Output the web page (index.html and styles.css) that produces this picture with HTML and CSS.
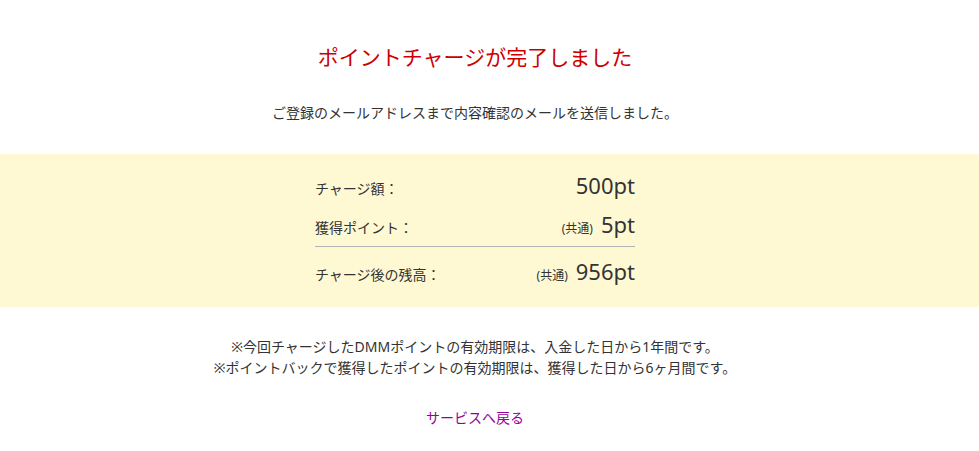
FILE: index.html
```html
<!DOCTYPE html>
<html lang="ja">
<head>
<meta charset="utf-8">
<title>ポイントチャージ完了</title>
<link rel="stylesheet" href="styles.css">
</head>
<body>
<div class="wrap">
  <h1 class="title">ポイントチャージが完了しました</h1>
  <p class="lead">ご登録のメールアドレスまで内容確認のメールを送信しました。</p>
</div>
<div class="band">
  <div class="wrap">
    <div class="summary">
      <div class="row">
        <span class="label">チャージ額：</span>
        <span class="value">500pt</span>
      </div>
      <div class="row row-2">
        <span class="label">獲得ポイント：</span>
        <span class="value"><span class="note-tag">(共通)</span>5pt</span>
      </div>
      <div class="row row-total">
        <span class="label">チャージ後の残高：</span>
        <span class="value"><span class="note-tag">(共通)</span>956pt</span>
      </div>
    </div>
  </div>
</div>
<div class="wrap">
  <div class="notes">
    <p>※今回チャージしたDMMポイントの有効期限は、入金した日から1年間です。</p>
    <p>※ポイントバックで獲得したポイントの有効期限は、獲得した日から6ヶ月間です。</p>
  </div>
  <p class="back"><a href="#" class="back-link">サービスへ戻る</a></p>
</div>
</body>
</html>
```
FILE: styles.css
```css
html, body {
  margin: 0;
  padding: 0;
  background: #fff;
}
body {
  font-family: "Noto Sans", "Noto Sans CJK JP", sans-serif;
  color: #333;
  font-size: 14px;
}
.wrap {
  width: 950px;
  text-align: center;
}
.title {
  margin: 0;
  padding-top: 42px;
  font-size: 21px;
  line-height: 30px;
  font-weight: normal;
  color: #cc0000;
}
.lead {
  margin: 30px 0 0;
  line-height: 21px;
  padding-bottom: 31px;
}
.band {
  background: #fff9d3;
  padding: 16px 0 21px;
}
.summary {
  width: 320px;
  margin: 0 auto;
  text-align: left;
}
.row {
  display: flex;
  justify-content: space-between;
  align-items: baseline;
  height: 30px;
  line-height: 30px;
  box-sizing: content-box;
}
.row-2 {
  margin-top: 9px;
}
.row-total {
  margin-top: 7px;
  border-top: 1px solid #b4b4b4;
  padding-top: 9px;
}
.label {
  font-size: 14px;
  line-height: 30px;
}
.value {
  font-size: 22px;
  line-height: 30px;
  color: #333;
}
.note-tag {
  font-size: 12px;
  line-height: 20px;
  margin-right: 8px;
}
.notes {
  margin-top: 29px;
}
.notes p {
  margin: 0;
  line-height: 21px;
}
.back {
  margin: 29px 0 0;
  line-height: 21px;
}
.back-link {
  color: #990099;
  text-decoration: none;
}
```
